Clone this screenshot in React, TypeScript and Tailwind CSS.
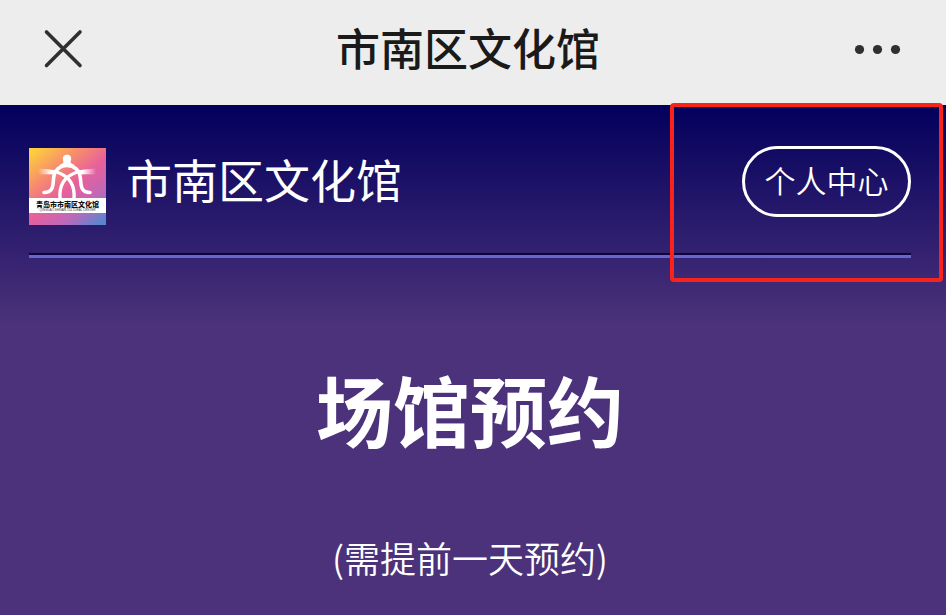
interface TopBarProps {
  title: string;
}

function TopBar({ title }: TopBarProps) {
  return (
    <header className="h-[105px] px-10 pb-2 bg-[#ededed] flex items-center justify-between">
      <button type="button" aria-label="关闭" className="w-[46px] h-12 text-[#303030]">
        <svg viewBox="0 0 46 48" className="w-[46px] h-12" fill="none" stroke="currentColor" strokeWidth="3.6" strokeLinecap="round">
          <path d="M6.5 7 40 40.5M40 7 6.5 40.5" />
        </svg>
      </button>
      <h1 className="pr-1 pb-1 text-[44px] leading-[64px] font-medium text-[#1a1a1a]">{title}</h1>
      <button type="button" aria-label="更多" className="w-[52px] h-12 text-[#303030]">
        <svg viewBox="0 0 52 48" className="w-[52px] h-12" fill="currentColor">
          <circle cx="5.500" cy="24.500" r="4.600" />
          <circle cx="23.500" cy="24.500" r="4.600" />
          <circle cx="41.500" cy="24.500" r="4.600" />
        </svg>
      </button>
    </header>
  );
}

function Logo() {
  return (
    <svg viewBox="0 0 77 77" className="w-[77px] h-[77px] shrink-0" role="img" aria-label="青岛市市南区文化馆">
      <defs>
        <linearGradient id="logoBg" x1="0.1" y1="0" x2="0.9" y2="1">
          <stop offset="0" stopColor="#fdcf3c" />
          <stop offset="0.28" stopColor="#f78d6c" />
          <stop offset="0.52" stopColor="#e8609b" />
          <stop offset="0.76" stopColor="#c068b8" />
          <stop offset="1" stopColor="#5a86d0" />
        </linearGradient>
        <linearGradient id="armLeft" x1="0" y1="0" x2="1" y2="0">
          <stop offset="0" stopColor="#fff" stopOpacity="0" />
          <stop offset="0.7" stopColor="#fff" />
        </linearGradient>
        <linearGradient id="armRight" x1="1" y1="0" x2="0" y2="0">
          <stop offset="0" stopColor="#fff" stopOpacity="0" />
          <stop offset="0.7" stopColor="#fff" />
        </linearGradient>
      </defs>
      <rect width="77" height="77" fill="url(#logoBg)" />
      <path d="M9 20.500Q19 21 28 22.500L27 26.500Q20 26 9 26.500Z" fill="url(#armLeft)" />
      <path d="M67 20.500Q57 21 48 22.500L49 26.500Q56 26 67 26.500Z" fill="url(#armRight)" />
      <path d="M34.500 14.500Q32 7 38 6.500 44 7 41.500 14.500Q43 16 46 17L38 19 30 17Q33 16 34.500 14.500Z" fill="#fff" />
      <g fill="none" stroke="#fff" strokeLinecap="round">
        <path
          d="M15 44.500C23 44.500 24 40 24.500 31C25 22 31 17.500 38 17.500S51 22 51.500 31C52 40 53 44.500 61 44.500"
          strokeWidth="3.600"
        />
        <path d="M47 24.500C34 29 30 39 31 51" strokeWidth="3.400" />
        <path d="M29 24.500C42 29 46 39 45 51" strokeWidth="3.400" />
      </g>
      <rect y="50" width="77" height="15" fill="#fff" />
      <text x="38.500" y="59" textAnchor="middle" fontSize="7" fontWeight="900" fill="#111">
        青岛市市南区文化馆
      </text>
      <text x="38.500" y="63" textAnchor="middle" fontSize="3" fill="#333" fontFamily="Liberation Sans, sans-serif">
        QINGDAO SHINAN CULTURAL CENTER
      </text>
    </svg>
  );
}

export default function App() {
  return (
    <div className="min-h-screen flex flex-col bg-[#4c327a] font-['Noto_Sans_CJK_SC',sans-serif]">
      <TopBar title="市南区文化馆" />
      <main className="relative flex-1 text-white bg-[linear-gradient(to_bottom,#02005c_0px,#4c327a_220px)]">
        <div className="ml-[29px] mr-[35px] pt-[41px] pb-7 flex items-start border-b-3 border-[#6666cc] shadow-[inset_0_-2px_0_#0c0440]">
          <div className="py-0.5">
            <Logo />
          </div>
          <h2 className="ml-5 text-[46px] leading-[64px]">市南区文化馆</h2>
          <button
            type="button"
            className="ml-auto pb-1 w-[169px] h-[71px] border-3 border-white rounded-full text-[31px] leading-[46px] font-[350]"
          >
            个人中心
          </button>
        </div>
        <section className="pt-[95px] pr-1.5 text-center">
          <h3 className="text-[77px] leading-[112px] font-bold">场馆预约</h3>
          <p className="mt-16 text-[36px] leading-[56px] font-[350]">(需提前一天预约)</p>
        </section>
        {/* highlight around the personal center entry */}
        <div className="absolute -top-0.5 right-[3px] w-[273px] h-[179px] border-4 border-[#f8231c] rounded-sm pointer-events-none" />
      </main>
    </div>
  );
}
